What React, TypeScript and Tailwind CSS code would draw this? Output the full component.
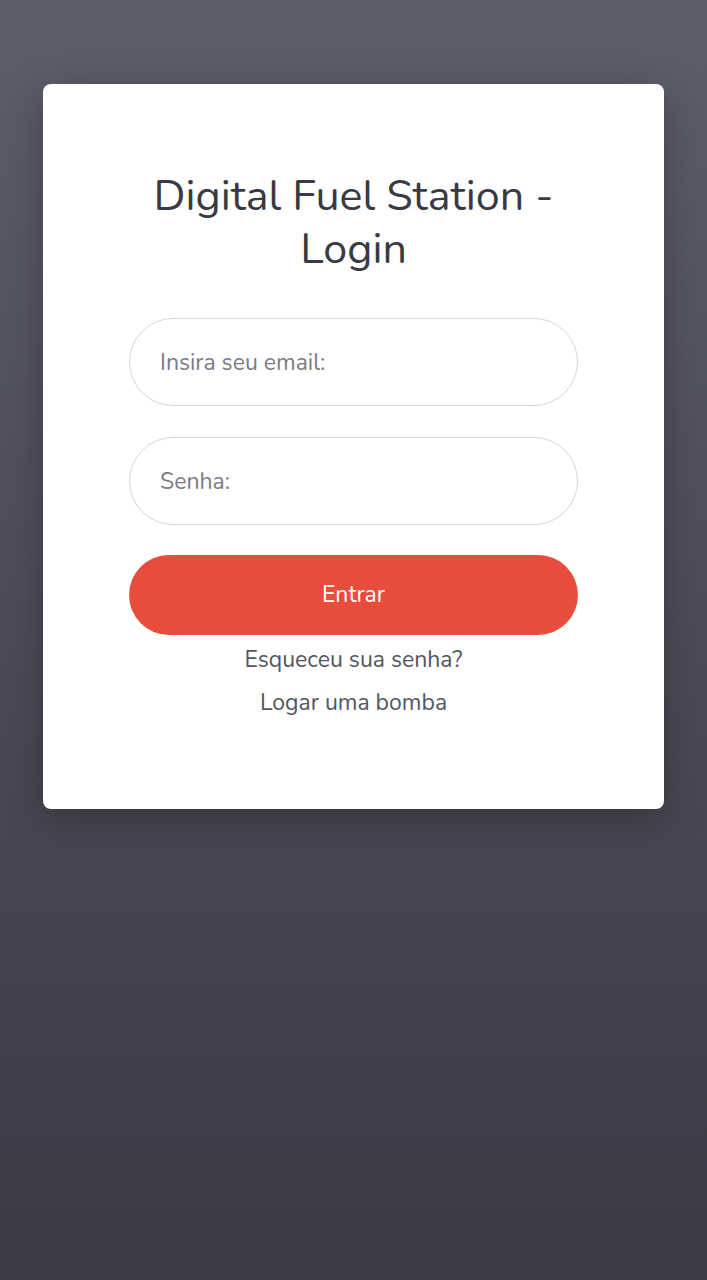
export default function App() {
  return (
    <div className="min-h-screen w-full bg-gradient-to-b from-[#5d5e6b] to-[#393a44] pt-[84px] font-['Nunito','Open_Sans',sans-serif]">
      <div className="mx-[43px] flex flex-col items-center rounded-lg bg-white px-[86px] pt-[86px] pb-[91px] shadow-[0_10px_40px_rgba(0,0,0,0.25)]">
        <h1 className="text-center text-[43px] leading-[53px] font-normal text-[#393a45]">
          Digital Fuel Station -<br />Login
        </h1>

        <form className="mt-[42px] flex w-full flex-col" onSubmit={(e) => e.preventDefault()}>
          <input
            type="email"
            placeholder="Insira seu email:"
            className="h-[88px] w-full rounded-full border border-[#d4d5dd] px-[30px] text-[23px] text-[#3a3a44] outline-none placeholder:text-[#7b7b85]"
          />
          <input
            type="password"
            placeholder="Senha:"
            className="mt-[31px] h-[88px] w-full rounded-full border border-[#d4d5dd] px-[30px] text-[23px] text-[#3a3a44] outline-none placeholder:text-[#7b7b85]"
          />
          <button
            type="submit"
            className="mt-[30px] h-[80px] w-full rounded-full bg-[#e74c3c] text-[23px] text-white"
          >
            Entrar
          </button>
        </form>

        <a className="mt-[10px] text-[23px] leading-[30px] text-[#55555f]">Esqueceu sua senha?</a>
        <a className="mt-[13px] text-[23px] leading-[30px] text-[#55555f]">Logar uma bomba</a>
      </div>
    </div>
  )
}
